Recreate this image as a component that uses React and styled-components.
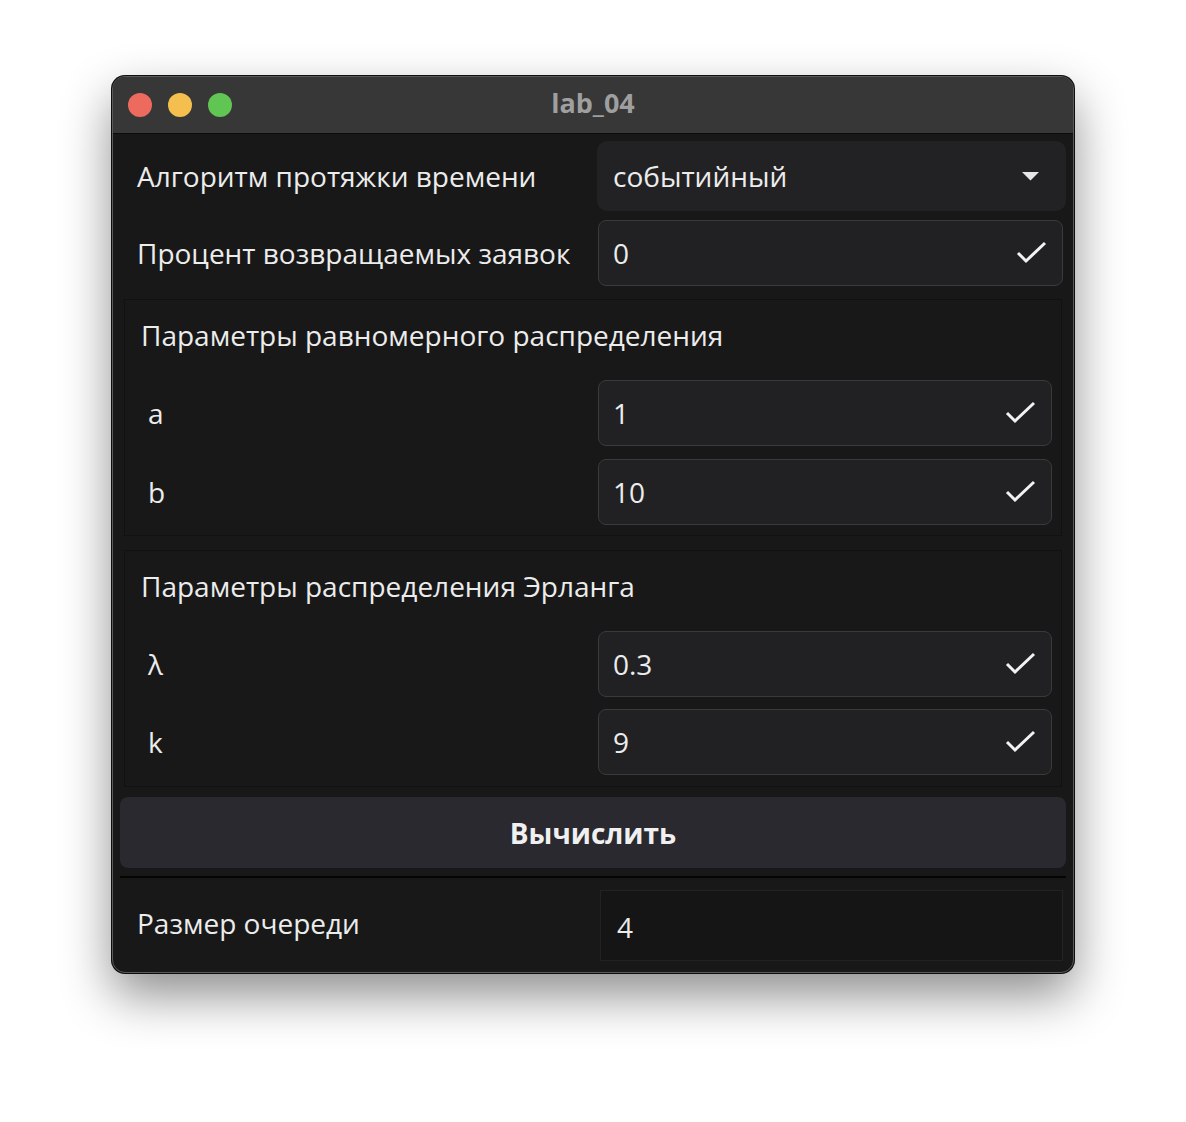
import styled, { createGlobalStyle } from "styled-components"

const GlobalStyle = createGlobalStyle`
  body {
    margin: 0;
    background: #ffffff;
    font-family: "Open Sans", "Noto Sans", sans-serif;
  }
`

const Page = styled.div`
  padding: 76px 0 0 112px;
  height: 1122px;
  box-sizing: border-box;
`

const Window = styled.div`
  width: 962px;
  height: 897px;
  box-sizing: border-box;
  border-radius: 13px;
  border: 1px solid #5a5a5a;
  background: #181818;
  overflow: hidden;
  box-shadow: 0 22px 50px rgba(0, 0, 0, 0.45), 0 0 0 1px #111;
  display: flex;
  flex-direction: column;
`

const TitleBar = styled.div`
  height: 56px;
  flex-shrink: 0;
  background: #373737;
  border-bottom: 1px solid #0c0c0c;
  display: flex;
  align-items: center;
  position: relative;
  padding-left: 15px;
  gap: 16px;
`

const Light = styled.span`
  width: 24px;
  height: 24px;
  border-radius: 50%;
  background: ${props => props.color};
`

const Title = styled.div`
  position: absolute;
  left: 0;
  right: 0;
  top: 8px;
  text-align: center;
  font-weight: 700;
  font-size: 27px;
  line-height: 36px;
  color: #9f9f9f;
  pointer-events: none;
`

const Content = styled.div`
  flex: 1;
  padding: 7px 7px 0 7px;
  display: flex;
  flex-direction: column;
`

const Row = styled.div`
  display: flex;
  align-items: center;
  height: ${props => props.h || 70}px;
  margin-bottom: ${props => props.mb || 0}px;
`

const Label = styled.div`
  width: ${props => props.w || 477}px;
  padding-left: ${props => props.pl || 17}px;
  padding-bottom: ${props => props.pb || 0}px;
  box-sizing: border-box;
  flex-shrink: 0;
  font-size: 28px;
  color: #ececec;
`

const Select = styled.div`
  flex: 1;
  height: 70px;
  background: #222224;
  border-radius: 10px;
  display: flex;
  align-items: center;
  justify-content: space-between;
  padding: 0 27px 0 16px;
  font-size: 28px;
  color: #ececec;
`

const Field = styled.div`
  flex: 1;
  height: 66px;
  box-sizing: border-box;
  margin: 0 ${props => props.mr || 3}px 0 1px;
  background: #212123;
  border: 1px solid #3a3a3c;
  border-radius: 8px;
  display: flex;
  align-items: center;
  justify-content: space-between;
  padding: 0 14px 0 14px;
  font-size: 28px;
  color: #ececec;
`

const Group = styled.div`
  margin: ${props => props.mt || 13}px 4px 0 4px;
  height: 237px;
  box-sizing: border-box;
  border: 1px solid #111111;
  background: #181818;
  display: flex;
  flex-direction: column;
  padding-right: 6px;
`

const GroupTitle = styled.div`
  height: 70px;
  margin-bottom: 10px;
  display: flex;
  align-items: center;
  padding-left: 16px;
  font-size: 28px;
  color: #ececec;
`

const Button = styled.button`
  margin-top: 10px;
  height: 71px;
  border: none;
  border-radius: 8px;
  background: #29292f;
  color: #f0f0f0;
  font-family: inherit;
  font-weight: 700;
  font-size: 28px;
`

const Divider = styled.div`
  margin-top: 8px;
  height: 2px;
  background: #050505;
`

const Output = styled.div`
  flex: 1;
  height: 71px;
  margin: 0 3px 0 3px;
  box-sizing: border-box;
  background: #151515;
  border: 1px solid #222222;
  display: flex;
  align-items: center;
  padding: 2px 16px 0;
  font-size: 28px;
  color: #ececec;
`

const Check = () => (
  <svg width="32" height="26" viewBox="0 0 32 26">
    <polyline points="2,13 10,21 29,3" fill="none" stroke="#f2f2f2" strokeWidth="3" />
  </svg>
)

const Caret = () => (
  <svg width="17" height="9" viewBox="0 0 17 9">
    <polygon points="0,0 17,0 8.5,8.5" fill="#e6e6e6" />
  </svg>
)

const ParamRow = ({ label, value, mb }) => (
  <Row h={66} mb={mb}>
    <Label w={472} pl={23}>{label}</Label>
    <Field mr={0}>
      <span>{value}</span>
      <Check />
    </Field>
  </Row>
)

const App = () => {
  return (
    <Page>
      <GlobalStyle />
      <Window>
        <TitleBar>
          <Light color="#ed6a5e" />
          <Light color="#f5bf4f" />
          <Light color="#61c554" />
          <Title>lab_04</Title>
        </TitleBar>
        <Content>
          <Row h={70} mb={9}>
            <Label>Алгоритм протяжки времени</Label>
            <Select>
              <span>событийный</span>
              <Caret />
            </Select>
          </Row>
          <Row h={66}>
            <Label>Процент возвращаемых заявок</Label>
            <Field>
              <span>0</span>
              <Check />
            </Field>
          </Row>
          <Group mt={13}>
            <GroupTitle>Параметры равномерного распределения</GroupTitle>
            <ParamRow label="a" value="1" mb={13} />
            <ParamRow label="b" value="10" />
          </Group>
          <Group mt={14}>
            <GroupTitle>Параметры распределения Эрланга</GroupTitle>
            <ParamRow label="λ" value="0.3" mb={12} />
            <ParamRow label="k" value="9" />
          </Group>
          <Button>Вычислить</Button>
          <Divider />
          <Row h={71} style={{ marginTop: 12 }}>
            <Label w={477} pb={6}>Размер очереди</Label>
            <Output>4</Output>
          </Row>
        </Content>
      </Window>
    </Page>
  )
}

export default App
